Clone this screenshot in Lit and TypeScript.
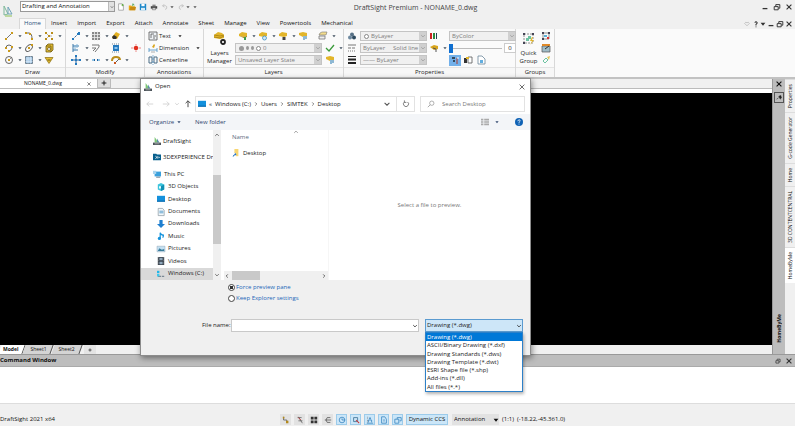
import { LitElement, html, svg, css, TemplateResult } from "lit";
import { customElement, state } from "lit/decorators.js";
import { classMap } from "lit/directives/class-map.js";

const art: Record<string, TemplateResult> = {
  logo: svg`<path d="M1 0L5 8L1 9Z" fill="none" stroke="#7fb89a"/><path d="M5 8V1L9 8Z" fill="none" stroke="#6fa3b8"/><path d="M2 10H9" stroke="#8cc152"/>`,
  app: svg`<path d="M2 0L5 4V7H2Z" fill="#7cc576"/><path d="M5 2L8 7H5Z" fill="#5b8fa8"/><path d="M0 10H10V7H0Z" fill="#4a5258"/><path d="M2 8.500H8" stroke="#ddd" stroke-width=".7"/>`,
  newdoc: svg`<path d="M2 1H6L8 3V9H2Z" fill="#fff" stroke="#888" stroke-width=".8"/><path d="M7 1V4M5.500 2.500H8.500" stroke="#57a639"/>`,
  open: svg`<path d="M1 3H4L5 4H9V9H1Z" fill="#e6a817"/><path d="M2 9L3 5H10L9 9Z" fill="#c98a10"/><path d="M6 4V1L8 2.500" fill="none" stroke="#3a9a3a"/>`,
  save: svg`<path d="M1 1H9V9H1Z" fill="#1e88c9"/><path d="M3 1H7V4H3Z" fill="#fff"/><path d="M2.500 6H7.500V9H2.500Z" fill="#d6ecf8"/>`,
  print: svg`<path d="M3 2H7V4H3Z" fill="#888"/><path d="M1 4H9V7H1Z" fill="#444"/><path d="M3 6H7V8.500H3Z" fill="#ddd" stroke="#555" stroke-width=".6"/>`,
  undo: svg`<path d="M2 3.500H6Q8 4 7 7L5 8M4 1.500L2 3.500L4 5.500" fill="none" stroke="#bbb"/>`,
  redo: svg`<path d="M8 3.500H4Q2 4 3 7L5 8M6 1.500L8 3.500L6 5.500" fill="none" stroke="#bbb"/>`,
  line: svg`<path d="M2 8L8 2" stroke="#777"/><path d="M1 7H3V9H1ZM7 1H9V3H7Z" fill="#c99a1c"/>`,
  pline: svg`<path d="M2 2H5Q8 2 8 8" fill="none" stroke="#666"/><path d="M1 1H3V3H1ZM7 7H9V9H7ZM5 2H7V4H5Z" fill="#c99a1c"/>`,
  split: svg`<path d="M2 2L5 5L2 8M5 5H8" stroke="#999" fill="none" stroke-width=".7"/><path d="M1 1H3V3H1ZM7 1H9V3H7ZM4 4H6V6H4ZM1 7H3V9H1ZM7 7H9V9H7Z" fill="#b98d1b"/>`,
  arc: svg`<path d="M2 5Q2 2 5 2Q8 2 8 5Q8 7 5 8" fill="none" stroke="#666"/><path d="M1 4H3V6H1ZM7 3H9V5H7ZM4 7H6V9H4Z" fill="#c99a1c"/>`,
  ellipse: svg`<ellipse cx="5" cy="5" rx="4" ry="2.500" transform="rotate(-45 5 5)" fill="none" stroke="#666"/><path d="M4 4H6V6H4ZM7 1H9V3H7Z" fill="#c99a1c"/>`,
  box: svg`<path d="M2 3H7V9H2ZM2 3L4 1H9V7L7 9" fill="#e4bd32" stroke="#6e5a10" stroke-width=".8"/><circle cx="5" cy="6" r="1.500" fill="#fff" stroke="#6e5a10" stroke-width=".8"/>`,
  circle: svg`<circle cx="5" cy="5" r="3.500" fill="none" stroke="#666"/><path d="M5 5L8 2" stroke="#666" stroke-width=".7"/><path d="M4 4H6V6H4Z" fill="#c99a1c"/>`,
  hatch: svg`<path d="M1.500 1.500H8.500V8.500H1.500Z" fill="#a9cbe8" stroke="#5a6d7c" stroke-width=".8"/><path d="M1.500 4H8.500M1.500 6.500H8.500M4 1.500V8.500M6.500 1.500V8.500" stroke="#d5e7f5" stroke-width=".7"/>`,
  cone: svg`<path d="M1 2.500H9L5 8.500Z" fill="#e4bd32" stroke="#8a6d10" stroke-width=".7"/><path d="M3.500 5H6.500" stroke="#6e5a10"/>`,
  move: svg`<path d="M2 8L7 3" stroke="#1e5f9c" stroke-dasharray="2 1"/><path d="M1 7H3V9H1ZM7 1H9V4H6V2H7Z" fill="#2479bd"/>`,
  array: svg`<path d="M1 1H9V9H1Z" fill="#888"/><path d="M0 3.500H10M0 6.500H10M3.500 0V10M6.500 0V10" stroke="#eee" stroke-width=".8"/>`,
  erase: svg`<path d="M1 6L5 1L9 3L6 8L2 8Z" fill="#e3b021"/><path d="M1 6L2 8L5 8L6 6L3 4Z" fill="#333"/>`,
  align: svg`<path d="M2 1V9M2 3H8M2 7H7" stroke="#3d78a8"/><path d="M4 2V8M6 1V5" stroke="#7fb2d8"/>`,
  offset: svg`<path d="M1 2H8V4L4 9M1 5H5L2 8" fill="none" stroke="#777"/>`,
  stretch: svg`<path d="M2 2H8V8H2Z" fill="#2479bd"/><path d="M1 1H9M1 9H9" stroke="#789" stroke-dasharray="1 1"/><path d="M3.500 4H6.500V6H3.500Z" fill="#8cc4ee"/>`,
  explode: svg`<path d="M5 2.500L7.500 5L5 7.500L2.500 5Z" fill="#e23b2a"/><circle cx="5" cy="5" r="2.200" fill="#e03020"/><path d="M0 5H2M8 5H10M5 1V2M5 8V9" stroke="#e88"/>`,
  cross: svg`<path d="M5 1V9M1 5H9" stroke="#1e5f9c"/><path d="M4 0H6V2H4ZM4 8H6V10H4ZM0 4H2V6H0ZM8 4H10V6H8ZM4 4H6V6H4Z" fill="#2479bd"/>`,
  breaks: svg`<path d="M1 5H4M6 5H9" stroke="#2d8fd0"/><path d="M3 4H4V6H3ZM6 4H7V6H6Z" fill="#1e5f9c"/>`,
  curve: svg`<path d="M1 6Q1 2 5 2Q9 2 9 5" fill="none" stroke="#b98d1b" stroke-width="2"/><path d="M4 8L8 4" stroke="#666"/><path d="M3 7H5V9H3Z" fill="#c9561c"/>`,
  text: svg`<path d="M1 1H9V9H1Z" fill="#eef2f5" stroke="#555" stroke-width=".8"/><path d="M3 3H6M3 3V7M5 5H8M5 7H7" stroke="#555" stroke-width=".8"/>`,
  dim: svg`<path d="M1 9V5M9 9V5M1 7H9" stroke="#4a90c4" stroke-width=".8"/><path d="M4 4L6 1L7 2L6 5Z" fill="#d8a51c"/><path d="M3 9H7" stroke="#999" stroke-width=".8"/>`,
  center: svg`<path d="M1 2H4V8H1ZM6 2H9V8H6Z" fill="none" stroke="#4a6d85"/><path d="M5 0V10" stroke="#4a90c4" stroke-width=".7" stroke-dasharray="2 1"/>`,
  layer: svg`<path d="M1 3L4 1L9 2V5L6 6L1 5Z" fill="#e2b52a"/><path d="M1 5L6 6L9 5V6L6 7Z" fill="#9c7a14"/><path d="M6 6H8V9H6Z" fill="#3f9a4a"/>`,
  layerB: svg`<path d="M1 3L4 1L9 2V5L6 6L1 5Z" fill="#e2b52a"/><circle cx="6.500" cy="7" r="2" fill="#cfe9f8" stroke="#3f8fc4" stroke-width=".8"/>`,
  layerK: svg`<path d="M1 3L4 1L9 2V5L6 6L1 5Z" fill="#e2b52a"/><path d="M4.500 6H7.500V9H4.500Z" fill="#444"/>`,
  layerC: svg`<path d="M1 2L5 1L9 2V5L5 6L1 4Z" fill="#e2b52a"/><path d="M5 5H9V8H7V9H5Z" fill="#8fb9d4"/>`,
  layerO: svg`<path d="M2 2L4 1H9L8 4H1Z" fill="#f3dc8c" stroke="#777" stroke-width=".6"/><path d="M1 5H7V8H1Z" fill="#eee" stroke="#777" stroke-width=".8"/>`,
  big: svg`<path d="M1 4L5 1L9 2L11 4V7L7 8L1 7Z" fill="#e2b52a"/><path d="M1 6L7 7L11 5M1 4L7 5L11 4" fill="none" stroke="#a57f12" stroke-width=".8"/><circle cx="10" cy="11" r="2" fill="#fff" stroke="#222" stroke-width="1.800"/>`,
  check: svg`<path d="M1 5L4 8L9 2" fill="none" stroke="#3a9a3a" stroke-width="1.300"/>`,
  paint: svg`<circle cx="5" cy="3.500" r="2" fill="#587287"/><circle cx="7" cy="6.500" r="2" fill="#2f4b60"/><circle cx="3" cy="6.500" r="2" fill="#6e89a0"/>`,
  ltype: svg`<path d="M1 2H9" stroke="#777"/><path d="M1 5H9" stroke="#777" stroke-dasharray="3 1"/><path d="M1 8H9" stroke="#777" stroke-dasharray="1 1"/>`,
  lweight: svg`<path d="M1 1.500H9" stroke="#222"/><path d="M1 4.500H9" stroke="#222" stroke-width="2"/><path d="M1 8H9" stroke="#222" stroke-width="2"/>`,
  bars: svg`<path d="M1 2H3V8H1Z" fill="#c22"/><path d="M4 2H6V8H4Z" fill="#2b8a3e"/><path d="M7 2H8V8H7Z" fill="#245"/>`,
  lamp: svg`<path d="M1 4L5 2L9 3V6L5 7Z" fill="#d8a51c"/><path d="M4 5L7 6V9" stroke="#555" fill="none"/>`,
  hl: svg`<path d="M2 2H5V4H2ZM3 5H5V7H3Z" fill="#34495e"/><path d="M7 3V9" stroke="#b03a2e"/><path d="M7 3H9" stroke="#fff"/>`,
  match: svg`<path d="M1 3H4V8H1Z" fill="#333"/><path d="M5 2H9V8H5Z" fill="#fff" stroke="#555" stroke-width=".8"/><path d="M3 2H6V4H3Z" fill="#e2b52a"/>`,
  doc: svg`<path d="M2 1H6L9 4V9H2Z" fill="#fff" stroke="#6a8599" stroke-width=".8"/><path d="M4 5H7V8H4Z" fill="#62aee0"/>`,
  group: svg`<path d="M2 3H11V12H2Z" fill="none" stroke="#777" stroke-width=".8" stroke-dasharray="2 1"/><path d="M1 2H3V4H1ZM10 2H12V4H10ZM1 11H3V13H1Z" fill="#445"/><path d="M4 7H7V10H4ZM6 5H9V8H6Z" fill="#6ec3a2"/><path d="M10 6L8 10H10L8 14L12 9H10L11 6Z" fill="#e2b52a"/>`,
  groupS: svg`<path d="M2 2H8V8H2Z" fill="none" stroke="#777" stroke-width=".8"/><path d="M1 1H3V3H1ZM7 1H9V3H7ZM1 7H3V9H1Z" fill="#445"/><path d="M3 4H6V6H3Z" fill="#5ab0d8"/><path d="M6 6L8 8M8 6L6 8" stroke="#d33"/>`,
  groupE: svg`<path d="M1 3H9V9H1Z" fill="#9fbcc6" stroke="#555" stroke-width=".7"/><path d="M1 1H9V3H1Z" fill="#e08a2a"/><path d="M4 6L8 3" stroke="#333"/>`,
  link: svg`<path d="M2 6L5 3L7 5L4 8Z" fill="none" stroke="#6ec3a2"/><path d="M6 2L9 1L8 5Z" fill="#e2c55a"/>`,
  desktop: svg`<path d="M0 1H10V8H0Z" fill="#1490dc"/><path d="M0 7H10V8.500H0Z" fill="#0a6cb0"/>`,
  threedx: svg`<path d="M0 1H4L5 2H10V9H0Z" fill="#075f8d"/><path d="M3 4L5 5.500L3 7M6 4V7M7 5.500H8.500" stroke="#fff" fill="none"/>`,
  pc: svg`<path d="M2 2H10V8H2Z" fill="#3aa0dc"/><path d="M0 1H4V5H0Z" fill="#a9d4ee"/><path d="M4 9H9" stroke="#567"/>`,
  cube: svg`<path d="M1 2L5 0L9 2V8L5 10L1 8Z" fill="#3cc4dc"/><path d="M5 4L9 2V8L5 10Z" fill="#1090b4"/><path d="M2.500 4H5V7H2.500Z" fill="#e8fbff"/>`,
  sheet: svg`<path d="M1.500 .5H7L9 3V9.500H1.500Z" fill="#f4f8fb" stroke="#7d8d99" stroke-width=".8"/><path d="M3 4H8M3 6H8" stroke="#3f8fc4"/>`,
  down: svg`<path d="M3 0H7V5H10L5 10L0 5H3Z" fill="#1e7fd0"/>`,
  music: svg`<path d="M4 8V1Q5 4 8 4Q8 6 7 7" fill="none" stroke="#1593dc" stroke-width="1.500"/><circle cx="3" cy="8" r="2" fill="#1593dc"/>`,
  picture: svg`<path d="M0 1.500H10V8.500H0Z" fill="#c4e0f2" stroke="#8fa5b5" stroke-width=".6"/><path d="M1 7.500L3 4L6 6L9 5V7.500H1Z" fill="#3a7d9c"/>`,
  video: svg`<path d="M1 0H9V10H1Z" fill="#39424c"/><path d="M3 1H7V4H3ZM3 6H7V9H3Z" fill="#90a8bc"/><path d="M2 0V10M8 0V10" stroke="#aaa" stroke-width=".6" stroke-dasharray="1 1"/>`,
  drive: svg`<path d="M0 1H3V4H0Z" fill="#23b5e8"/><path d="M1 8H5M6 8H9" stroke="#7b8894" stroke-width="1.500"/><path d="M0 5H3V8H0Z" fill="#3cc8ee"/>`,
  folder: svg`<path d="M3 0H8V9H3Z" fill="#f7d672"/><path d="M1 5H5V10H1Z" fill="#fff"/><path d="M1.500 9.500Q1.500 7 5 6.500M3.500 5.500L5 6.500L4 8" stroke="#1e6fc0" stroke-width="1.200" fill="none"/>`,
  refresh: svg`<path d="M3 2.500A3.200 3.200 0 1 0 7 2.500M3 0.500V3H5.500" fill="none" stroke="#555" stroke-width=".9"/>`,
  search: svg`<circle cx="6" cy="4" r="2.700" fill="none" stroke="#888" stroke-width=".8"/><path d="M4 6L1 9" stroke="#888" stroke-width=".9"/>`,
  view: svg`<path d="M0 1H3V3H0ZM0 4H3V6H0ZM0 7H3V9H0ZM4 1H10V3H4ZM4 4H10V6H4ZM4 7H10V9H4Z" fill="#aaa"/>`,
  help: svg`<circle cx="5" cy="5" r="5" fill="#0f62b5"/><path d="M3.500 4Q4 2.200 5.200 2.200Q6.700 2.500 6.400 4Q5 4.800 5 6M5 7V8.200" fill="none" stroke="#fff" stroke-width="1"/>`,
  left: svg`<path d="M9 5H1M4 2L1 5L4 8" fill="none" stroke="currentColor"/>`,
  right: svg`<path d="M1 5H9M6 2L9 5L6 8" fill="none" stroke="currentColor"/>`,
  up: svg`<path d="M5 9V1M2 4L5 1L8 4" fill="none" stroke="currentColor" stroke-width="1.200"/>`,
  chevD: svg`<path d="M2 3.500L5 6.500L8 3.500" fill="none" stroke="currentColor" stroke-width="1.300"/>`,
  chevU: svg`<path d="M2 6.500L5 3.500L8 6.500" fill="none" stroke="currentColor" stroke-width="1.300"/>`,
  chevL: svg`<path d="M7 1L3 5L7 9" fill="none" stroke="currentColor" stroke-width="2"/>`,
  chevR: svg`<path d="M3 1L7 5L3 9" fill="none" stroke="currentColor" stroke-width="2"/>`,
  tri: svg`<path d="M1 3H9L5 8Z" fill="currentColor"/>`,
  x: svg`<path d="M2 2L8 8M8 2L2 8" stroke="currentColor" stroke-width="1.400"/>`,
  thinx: svg`<path d="M1 1L9 9M9 1L1 9" stroke="currentColor" stroke-width="1.300"/>`,
  plus: svg`<path d="M5 1V9M1 5H9" stroke="currentColor" stroke-width="1.500"/>`,
  min: svg`<path d="M2 7H8" stroke="currentColor" stroke-width="1.600"/>`,
  restore: svg`<path d="M1.500 4.500H6.500V8.500H1.500ZM3.500 4V2H8.500V6.500H7" fill="none" stroke="currentColor" stroke-width="1.200"/>`,
  heart: svg`<path d="M5 8L1 4L3 2L5 3L7 2L9 4Z" fill="none" stroke="#aaa"/>`,
  ques: svg`<path d="M3.500 3.500Q5 1 6.500 3.500Q6.500 4.500 5 5.500V7M5 8V9" fill="none" stroke="currentColor" stroke-width="1.300"/>`,
  pin: svg`<path d="M1 7L4 5M4 3L8 7M5 2L8 1L9 5L7 6Z" fill="#222" stroke="#222"/>`,
  snap: svg`<path d="M2 1V5H6V8" fill="none" stroke="#555"/><path d="M5 6H8V9H5ZM1 1H3V3H1Z" fill="#b58a1a"/>`,
  cursor: svg`<path d="M3 1L8 9M2 2H7M3 6H8" stroke="#555" stroke-width=".9"/><path d="M3 2L6 5" stroke="#c33"/>`,
  grid: svg`<path d="M1 1H4.500V4.500H1ZM5.500 1H9V4.500H5.500ZM1 5.500H4.500V9H1ZM5.500 5.500H9V9H5.500Z" fill="#333"/>`,
  ortho: svg`<path d="M8 2H4Q1 5 4 8H8M1 5H9" fill="none" stroke="#555"/>`,
  polar: svg`<circle cx="5" cy="5" r="3.500" fill="none" stroke="#3a85c0"/><path d="M5 5H9M5 3V5" stroke="#3a85c0"/>`,
  esnap: svg`<path d="M2 2H7V7H2Z" fill="none" stroke="#3a6d90"/><path d="M5 5L9 9" stroke="#c33" stroke-width="1.300"/>`,
  etrack: svg`<path d="M1 9H9M3 8V5H7V8" fill="none" stroke="#3a85c0"/><path d="M2 1V9" stroke="#777" stroke-dasharray="1 1"/><path d="M4 2H6V4H4Z" fill="#3a85c0"/>`,
  paper: svg`<path d="M2 1H6L8 4V9H2Z" fill="none" stroke="#3a85c0"/><path d="M5 4V7" stroke="#3a85c0"/>`,
  lock: svg`<path d="M1 4H6V9H1ZM4 4V2H9V6H7" fill="none" stroke="#3a85c0"/>`,
};

const icon = (name: string, size = "s10") => html`<svg class="ic ${size}" viewBox=${name === "big" || name === "group" ? "0 0 14 15" : "0 0 10 10"} aria-hidden="true">${art[name]}</svg>`;

const shared = css`
  * { box-sizing: border-box; }
  button, input, select, a { font: inherit; color: inherit; margin: 0; padding: 0; border: 0; border-radius: 0; background: none; text-decoration: none; }
  button { display: inline-flex; align-items: center; justify-content: center; white-space: nowrap; }
  .ic { display: block; flex: none; overflow: visible; }
  .s4 { width: 4px; height: 4px; }
  .s6 { width: 6px; height: 6px; }
  .s8 { width: 8px; height: 8px; }
  .s10 { width: 10px; height: 10px; }
  .s14 { width: 14px; height: 15px; }
  .combo { display: flex; align-items: center; min-width: 0; position: relative; }
  .combo select { appearance: none; width: 100%; height: 100%; outline: 0; }
  .combo .arrow { position: absolute; right: 0; top: 0; bottom: 0; display: flex; align-items: center; justify-content: center; width: 7px; pointer-events: none; }
`;

@customElement("cad-ribbon")
class CadRibbon extends LitElement {
  static styles = [shared, css`
    :host { display: block; }
    .ribbon { display: flex; background: #fafafa; height: 50px; border-bottom: 2px solid #c2c2c2; color: #222; }
    .group { display: flex; flex-direction: column; border-right: 1px solid #d8d8d8; }
    .body { flex: 1; display: flex; padding-top: 1px; }
    .caption { height: 10px; line-height: 9px; text-align: center; border-top: 1px solid #e4e4e4; background: #f7f7f7; }
    .tools { display: grid; grid-auto-rows: 12px; align-items: center; grid-template-columns: repeat(3, 20px); padding-left: 4px; }
    .tools.four { grid-template-columns: repeat(4, 20px); padding-left: 5px; }
    .tool { display: flex; gap: 4px; justify-content: flex-start; color: #3d4c5c; }
    .draw { width: 66px; } .modify { width: 79px; } .annot { width: 59px; } .layers { width: 140px; } .props { width: 172px; } .groups { width: 39px; }
    .rows { display: grid; grid-auto-rows: 12px; align-items: center; }
    .annot .rows { padding-left: 3px; }
    .annot button { justify-content: flex-start; gap: 1px; }
    .annot button .s4 { margin-left: 6px; }
    .large { display: flex; flex-direction: column; align-items: center; justify-content: flex-start; width: 31px; padding-top: 1px; line-height: 8px; }
    .large .ic { margin-bottom: 3px; }
    .large.narrow { width: 25px; }
    .line { display: flex; align-items: center; gap: 3px; }
    .icons { display: flex; padding-left: 3px; }
    .icons .tool { width: 20px; }
    .combo { height: 10px; background: #f0f0f0; border: 1px solid #c4c4c4; color: #7d7d7d; }
    .combo select { padding-left: 2px; opacity: 1; }
    .combo .arrow { background: #d0d0d0; color: #999; }
    .layers .combo { width: 87px; }
    .props .combo { width: 67px; }
    .with-dot { padding-left: 3px; }
    .marks { display: flex; gap: 2px; align-items: center; }
    .dot { width: 5px; height: 5px; border-radius: 50%; background: #999; flex: none; }
    .dot.ring { background: #fff; border: 1px solid #888; }
    .dot.small { width: 3px; height: 4px; }
    .props .body { gap: 2px; padding-left: 3px; }
    .slide { display: flex; align-items: center; gap: 2px; width: 67px; }
    .slide input[type="range"] { appearance: none; width: 53px; height: 10px; background: linear-gradient(#bbb, #bbb) center / 100% 1px no-repeat; }
    .slide input[type="range"]::-webkit-slider-thumb { appearance: none; width: 4px; height: 9px; background: #0f6fd0; }
    .slide input[type="text"] { width: 12px; height: 10px; border: 1px solid #ccc; background: #fff; text-align: center; }
    .seg { display: flex; gap: 1px; }
    .seg button { width: 12px; height: 11px; }
    .seg .on { background: #72b0ea; }
    .side { display: grid; grid-auto-rows: 12px; align-items: center; }
  `];

  tool(name: string, arrow = true) {
    return html`<button class="tool" aria-label=${name}>${icon(name)}${arrow ? icon("tri", "s4") : ""}</button>`;
  }

  combo(label: string, value: string) {
    return html`<div class="combo"><select aria-label=${label}><option>${value}</option></select><span class="arrow">${icon("chevD", "s6")}</span></div>`;
  }

  render() {
    return html`<div class="ribbon">
      <section class="group draw"><div class="body"><div class="tools">
        ${this.tool("line")}${this.tool("pline")}${this.tool("split")}
        ${this.tool("arc")}${this.tool("ellipse")}${this.tool("box", false)}
        ${this.tool("circle")}${this.tool("hatch")}${this.tool("cone", false)}
      </div></div><div class="caption">Draw</div></section>
      <section class="group modify"><div class="body"><div class="tools four">
        ${this.tool("move")}${this.tool("array")}${this.tool("erase")}<span></span>
        ${this.tool("align")}${this.tool("offset", false)}${this.tool("stretch", false)}${this.tool("explode", false)}
        ${this.tool("cross")}${this.tool("breaks")}${this.tool("curve")}<span></span>
      </div></div><div class="caption">Modify</div></section>
      <section class="group annot"><div class="body"><div class="rows">
        <button>${icon("text")}Text${icon("tri", "s4")}</button>
        <button>${icon("dim")}Dimension${icon("tri", "s4")}</button>
        <button>${icon("center")}Centerline</button>
      </div></div><div class="caption">Annotations</div></section>
      <section class="group layers"><div class="body">
        <button class="large">${icon("big", "s14")}<span>Layers</span><span>Manager</span></button>
        <div class="rows">
          <div class="icons">${this.tool("layer")}${this.tool("layerB")}${this.tool("layerK")}${this.tool("layerC", false)}${this.tool("layerO")}</div>
          <div class="line"><div class="combo with-dot"><span class="marks"><i class="dot"></i><i class="dot small"></i><i class="dot small"></i><i class="dot ring"></i></span><select aria-label="Active layer"><option>0</option></select><span class="arrow">${icon("chevD", "s6")}</span></div>${this.tool("check")}</div>
          <div class="line">${this.combo("Layer state", "Unsaved Layer State")}${this.tool("layerC", false)}</div>
        </div>
      </div><div class="caption">Layers</div></section>
      <section class="group props"><div class="body">
        <div class="rows">
          <div class="line">${icon("paint")}<div class="combo with-dot"><i class="dot ring"></i><select aria-label="Line color"><option>ByLayer</option></select><span class="arrow">${icon("chevD", "s6")}</span></div></div>
          <div class="line">${icon("ltype")}${this.combo("Line style", "ByLayer\u00a0\u00a0\u00a0\u00a0\u00a0Solid line")}</div>
          <div class="line">${icon("lweight")}${this.combo("Line weight", "—— ByLayer")}</div>
        </div>
        <div class="rows">
          ${this.tool("bars", false)}${this.tool("lamp")}<span></span>
        </div>
        <div class="rows">
          ${this.combo("Print style", "ByColor")}
          <div class="slide"><input type="range" value="0" aria-label="Transparency"><input type="text" value="0" aria-label="Transparency value"></div>
          <div class="seg"><button class="on" aria-label="Highlight">${icon("hl")}</button><button aria-label="Match">${icon("match")}</button><button aria-label="Sheet">${icon("doc")}</button></div>
        </div>
      </div><div class="caption">Properties</div></section>
      <section class="group groups"><div class="body">
        <button class="large narrow">${icon("group", "s14")}<span>Quick</span><span>Group</span></button>
        <div class="side">${this.tool("groupS", false)}${this.tool("groupE", false)}${this.tool("link", false)}</div>
      </div><div class="caption">Groups</div></section>
    </div>`;
  }
}

const places: [string, string][] = [
  ["pc", "This PC"], ["cube", "3D Objects"], ["desktop", "Desktop"], ["sheet", "Documents"], ["down", "Downloads"],
  ["music", "Music"], ["picture", "Pictures"], ["video", "Videos"], ["drive", "Windows (C:)"],
];

const fileTypes = ["Drawing (*.dwg)", "ASCII/Binary Drawing (*.dxf)", "Drawing Standards (*.dws)", "Drawing Template (*.dwt)", "ESRI Shape file (*.shp)", "Add-ins (*.dll)", "All files (*.*)"];

@customElement("open-dialog")
class OpenDialog extends LitElement {
  @state() selectedType = 0;

  static styles = [shared, css`
    :host { display: flex; flex-direction: column; background: #f0f0f0; border: 1px solid #8c8c8c; box-shadow: 1px 2px 6px rgba(0, 0, 0, 0.45); color: #222; white-space: nowrap; }
    .title { display: flex; align-items: center; gap: 3px; height: 15px; padding: 0 5px 0 3px; background: #fff; }
    .title button { margin-left: auto; color: #444; }
    .address { display: flex; align-items: center; height: 20px; background: #fff; padding: 0 5px; }
    .nav { display: flex; align-items: center; gap: 8px; padding: 0 4px 0 0; color: #ccc; width: 49px; }
    .nav .go { color: #444; }
    .nav .small { margin: 0 -4px; }
    .path { flex: 1; display: flex; align-items: center; gap: 3px; height: 16px; border: 1px solid #e2e2e2; padding-left: 2px; }
    .path .s4 { color: #666; }
    .path .drop { margin-left: auto; width: 12px; height: 100%; color: #555; }
    .path .again { width: 18px; height: 100%; border-left: 1px solid #e2e2e2; }
    .search { display: flex; align-items: center; gap: 7px; width: 105px; height: 16px; border: 1px solid #e2e2e2; margin-left: 5px; padding-left: 6px; }
    .search input { flex: 1; min-width: 0; outline: 0; }
    .search input::placeholder { color: #777; opacity: 1; }
    .bar { display: flex; align-items: center; height: 16px; background: #f3f5f8; padding: 0 7px 0 8px; color: #30476e; }
    .bar button { gap: 3px; }
    .bar .new { margin-left: 14px; }
    .bar .views { margin-left: auto; gap: 6px; margin-right: 16px; }
    .main { display: flex; height: 150px; background: #fff; }
    .places { width: 72px; padding-top: 3px; overflow: hidden; display: flex; flex-direction: column; }
    .places a { display: flex; align-items: center; gap: 3px; padding-left: 16px; }
    .places .pinned a { height: 16px; padding-left: 12px; gap: 2px; }
    .pinned { padding-bottom: 3px; }
    .tree { flex: 1; display: grid; grid-template-rows: repeat(9, 1fr); }
    .places .top { padding-left: 12px; }
    .places .on { background: #d9d9d9; }
    .vbar { width: 8px; display: flex; flex-direction: column; align-items: center; background: #f0f0f0; color: #555; padding: 2px 0; }
    .vbar i { width: 8px; flex: 1; background: #c9c9c9; margin: 37px 0 28px; }
    .files { width: 108px; display: flex; flex-direction: column; border-right: 1px solid #f6f6f6; }
    .col { display: flex; height: 13px; align-items: flex-end; padding-left: 11px; line-height: 11px; color: #5c6b7e; position: relative; }
    .col .ic { position: absolute; left: 72px; top: -1px; color: #888; }
    .file { display: flex; align-items: center; gap: 3px; margin: 4px 0 0 11px; height: 12px; }
    .hbar { margin: auto 0 0 3px; height: 9px; background: #f0f0f0; display: flex; align-items: center; gap: 3px; padding: 0 2px 0 1px; color: #444; }
    .hbar i { width: 28px; height: 9px; background: #c9c9c9; margin-right: auto; }
    .preview { flex: 1; display: flex; align-items: center; justify-content: center; color: #777; }
    .modes { display: flex; flex-direction: column; padding: 2px 0 0 87px; color: #2166b8; }
    .modes label { display: flex; align-items: center; gap: 1px; height: 11px; }
    .modes input { appearance: none; width: 7px; height: 7px; border: 1px solid #444; border-radius: 50%; background: #fff; }
    .modes input:checked { background: radial-gradient(#333 45%, #fff 55%); }
    .row { display: flex; align-items: center; margin: 15px 7px 23px 61px; }
    .row > label { width: 29px; }
    .name { flex: 1; height: 13px; background: #fff; border: 1px solid #c9c9c9; }
    .name input { width: 100%; height: 100%; padding-left: 2px; outline: 0; }
    .type { width: 98px; height: 13px; margin-left: 6px; border: 1px solid #5b9bd0; background: #cde6f8; }
    .type select { padding-left: 1px; }
    .list { position: absolute; left: -1px; right: -1px; top: 12px; height: 60px; border: 1px solid #2d80c8; background: #fff; margin: 0; padding: 0; list-style: none; display: grid; grid-template-rows: repeat(7, 1fr); line-height: 8px; box-shadow: 1px 2px 3px rgba(0, 0, 0, 0.3); }
    .list li { padding-left: 1px; }
    .list .on { background: #0078d7; color: #fff; }
  `];

  render() {
    return html`
      <header class="title">${icon("app", "s8")}<span>Open</span><button aria-label="Close">${icon("thinx", "s6")}</button></header>
      <div class="address">
        <div class="nav"><button aria-label="Back">${icon("left", "s8")}</button><button aria-label="Forward">${icon("right", "s8")}</button><button class="small" aria-label="Recent">${icon("chevD", "s6")}</button><button class="go" aria-label="Up">${icon("up", "s8")}</button></div>
        <nav class="path">${icon("desktop", "s8")}<span>«</span><a href="#c">Windows (C:)</a>${icon("chevR", "s4")}<a href="#u">Users</a>${icon("chevR", "s4")}<a href="#s">SIMTEK</a>${icon("chevR", "s4")}<a href="#d">Desktop</a>
          <button class="drop" aria-label="Previous locations">${icon("chevD", "s8")}</button><button class="again" aria-label="Refresh">${icon("refresh", "s8")}</button></nav>
        <div class="search">${icon("search", "s8")}<input type="text" placeholder="Search Desktop" aria-label="Search Desktop"></div>
      </div>
      <div class="bar"><button>Organize ${icon("tri", "s4")}</button><button class="new">New folder</button><button class="views" aria-label="Change view">${icon("view", "s8")}${icon("tri", "s4")}</button><button aria-label="Help">${icon("help", "s8")}</button></div>
      <div class="main">
        <nav class="places">
          <div class="pinned"><a href="#ds">${icon("app", "s8")}DraftSight</a><a href="#dx">${icon("threedx", "s8")}3DEXPERIENCE Dr</a></div>
          <div class="tree">${places.map(([i, t], n) => html`<a href="#p${n}" class=${classMap({ top: n === 0, on: n === 8 })}>${icon(i, "s8")}${t}</a>`)}</div>
        </nav>
        <div class="vbar">${icon("chevU", "s6")}<i></i>${icon("chevD", "s6")}</div>
        <section class="files">
          <div class="col">Name${icon("chevU", "s6")}</div>
          <a class="file" href="#f">${icon("folder", "s8")}Desktop</a>
          <div class="hbar">${icon("chevL", "s4")}<i></i>${icon("chevR", "s4")}</div>
        </section>
        <section class="preview">Select a file to preview.</section>
      </div>
      <div class="modes">
        <label><input type="radio" name="mode" checked>Force preview pane</label>
        <label><input type="radio" name="mode">Keep Explorer settings</label>
      </div>
      <div class="row">
        <label for="fn">File name:</label>
        <div class="combo name"><input id="fn" type="text"><span class="arrow">${icon("chevD", "s6")}</span></div>
        <div class="combo type"><select aria-label="File type">${fileTypes.map((t) => html`<option>${t}</option>`)}</select><span class="arrow">${icon("chevD", "s6")}</span>
          <ul class="list" role="listbox" aria-label="File types">${fileTypes.map((t, n) => html`<li role="option" aria-selected=${n === this.selectedType} class=${classMap({ on: n === this.selectedType })} @click=${() => (this.selectedType = n)}>${t}</li>`)}</ul>
        </div>
      </div>`;
  }
}

const menus = ["Home", "Insert", "Import", "Export", "Attach", "Annotate", "Sheet", "Manage", "View", "Powertools", "Mechanical"];
const panels = ["Properties", "G-code Generator", "Home", "3D CONTENTCENTRAL", "HomeByMe"];

@customElement("app-root")
class AppRoot extends LitElement {
  static styles = [shared, css`
    :host { display: flex; flex-direction: column; min-height: 100vh; position: relative; overflow: hidden; background: #f0f0f0; font: 6px/9px "Open Sans", "Noto Sans", sans-serif; color: #111; }
    .head { display: grid; grid-template-columns: 18px 1fr; height: 29px; }
    .brand { padding: 6px 0 0 3px; }
    .top { display: flex; align-items: center; height: 13px; padding: 0 2px; position: relative; }
    .top .combo { width: 95px; height: 11px; background: #fff; border: 1px solid #999; }
    .top .combo select { padding-left: 1px; }
    .top .arrow { background: #e0e0e0; border-left: 1px solid #bbb; width: 6px; }
    .quick { display: flex; align-items: center; gap: 3px; padding-left: 2px; color: #555; }
    .quick button { gap: 1px; }
    .title { position: absolute; left: 18px; right: 0; text-align: center; font-size: 7px; color: #444; top: 3px; pointer-events: none; }
    .win { margin-left: auto; display: flex; gap: 4px; color: #333; }
    .menu { display: flex; align-items: flex-end; height: 16px; padding-left: 1px; padding-right: 2px; }
    .menu a { padding: 1px 5px 0; height: 11px; }
    .menu .on { background: #fafafa; border: 1px solid #d8d8d8; border-bottom: 0; padding: 0 4px; color: #29507c; }
    .menu .win { gap: 1px; height: 11px; align-items: center; }
    .work { flex: 1; display: grid; grid-template-columns: 1fr 12px 10px; }
    .center { display: flex; flex-direction: column; min-width: 0; border-right: 1px solid #999; }
    .docs { display: flex; height: 10px; border-bottom: 1px solid #bbb; }
    .doc { display: flex; align-items: center; background: #fff; width: 97px; padding: 0 6px 0 24px; justify-content: space-between; font-size: 5px; }
    .docs button { width: 14px; background: #ddd; border: 1px solid #bbb; border-top: 0; }
    .canvas { flex: 1; background: #000; border-top: 4px solid #fff; }
    .sheets { display: flex; height: 9px; background: #f0f0f0; font-size: 5px; line-height: 9px; padding-right: 8px; }
    .sheets a { position: relative; z-index: 0; padding: 0 6px; }
    .sheets a::before { content: ""; position: absolute; inset: 0; z-index: -1; background: #d4d4d4; border-right: 1px solid #555; transform: skewX(-20deg); }
    .sheets .on { font-weight: 700; padding-left: 3px; }
    .sheets .on::before { background: #fff; }
    .sheets button { width: 12px; margin-left: 3px; background: #e4e4e4; }
    .dock { background: #bdbdbd; display: flex; flex-direction: column; align-items: center; padding: 1px 0 11px; gap: 4px; }
    .dock .pin { width: 10px; height: 11px; border: 1px solid #555; }
    .vert { writing-mode: vertical-rl; transform: rotate(180deg); white-space: nowrap; }
    .dock .vert { margin-top: auto; font-weight: 700; font-size: 5px; }
    .tabs { display: flex; flex-direction: column; font-size: 5px; line-height: 9px; }
    .tabs a { padding: 4px 0; border-top: 1px solid #ddd; display: flex; justify-content: center; }
    .tabs .on { background: #fff; }
    .cmdhead { display: flex; align-items: center; height: 13px; background: #bdbdbd; border-top: 1px solid #999; border-bottom: 1px solid #aaa; padding: 0 2px 0 0; font-weight: 700; }
    .cmdhead .win { align-items: center; }
    .cmd { height: 37px; background: #fff; border: 0; resize: none; display: block; width: 100%; outline: 0; border-bottom: 1px solid #ddd; }
    .status { display: flex; align-items: center; height: 22px; padding-top: 9px; white-space: nowrap; }
    .status .info { width: 280px; }
    .status .btns { display: flex; gap: 3px; }
    .status button { width: 11px; height: 11px; background: #e2e2e2; }
    .status .on { background: #cbe6f8; border: 1px solid #9ccbea; }
    .status .ccs { width: 42px; }
    .status .scale { width: 47px; height: 11px; background: #e2e2e2; margin: 0 3px 0 4px; }
    .scale select { padding-left: 2px; }
    .dialog { position: absolute; left: 140px; top: 78px; width: 391px; }
  `];

  render() {
    return html`
      <header class="head">
        <div class="brand">${icon("logo", "s10")}</div>
        <div>
          <div class="top">
            <div class="combo"><select aria-label="Workspace"><option>Drafting and Annotation</option></select><span class="arrow">${icon("chevD", "s4")}</span></div>
            <div class="quick">${["newdoc", "open", "save", "print"].map((n) => html`<button aria-label=${n}>${icon(n, "s8")}</button>`)}<button aria-label="undo">${icon("undo", "s8")}${icon("tri", "s4")}</button><button aria-label="redo">${icon("redo", "s8")}${icon("tri", "s4")}</button>${icon("tri", "s4")}</div>
            <div class="title">DraftSight Premium - NONAME_0.dwg</div>
            <div class="win"><button aria-label="Minimize">${icon("min", "s8")}</button><button aria-label="Restore">${icon("restore", "s8")}</button><button aria-label="Close">${icon("x", "s8")}</button></div>
          </div>
          <nav class="menu">${menus.map((m, n) => html`<a href="#m${n}" class=${classMap({ on: n === 0 })}>${m}</a>`)}
            <div class="win"><button aria-label="Favorites">${icon("heart", "s6")}</button><span></span><button aria-label="Help">${icon("ques", "s8")}${icon("tri", "s6")}</button><button aria-label="Minimize document">${icon("min", "s8")}</button><button aria-label="Restore document">${icon("restore", "s8")}</button><button aria-label="Close document">${icon("x", "s8")}</button></div>
          </nav>
        </div>
      </header>
      <cad-ribbon></cad-ribbon>
      <main class="work">
        <div class="center">
          <div class="docs"><div class="doc">NONAME_0.dwg${icon("thinx", "s4")}</div><button aria-label="New tab">${icon("plus", "s6")}</button></div>
          <div class="canvas"></div>
          <nav class="sheets"><a class="on" href="#s0">Model</a><a href="#s1">Sheet1</a><a href="#s2">Sheet2</a><button aria-label="Add sheet">${icon("plus", "s4")}</button></nav>
        </div>
        <div class="dock">${icon("x", "s8")}<button class="pin" aria-label="Pin">${icon("pin", "s6")}</button><span class="vert">HomeByMe</span></div>
        <nav class="tabs">${panels.map((p, n) => html`<a href="#t${n}" class=${classMap({ on: n === 4 })}><span class="vert">${p}</span></a>`)}</nav>
      </main>
      <div class="cmdhead">Command Window<div class="win">${icon("restore", "s6")}${icon("x", "s8")}</div></div>
      <textarea class="cmd" aria-label="Command Window"></textarea>
      <footer class="status"><span class="info">DraftSight 2021 x64</span>
        <div class="btns">${["snap", "cursor", "grid", "ortho"].map((n) => html`<button aria-label=${n}>${icon(n, "s8")}</button>`)}${["polar", "esnap", "etrack", "paper", "lock"].map((n) => html`<button class="on" aria-label=${n}>${icon(n, "s8")}</button>`)}<button class="on ccs">Dynamic CCS</button></div>
        <div class="combo scale"><select aria-label="Annotation scale"><option>Annotation</option></select><span class="arrow">${icon("tri", "s6")}</span></div>
        <span>(1:1)&nbsp; (-18.22,-45.361.0)</span>
      </footer>
      <open-dialog class="dialog"></open-dialog>`;
  }
}
